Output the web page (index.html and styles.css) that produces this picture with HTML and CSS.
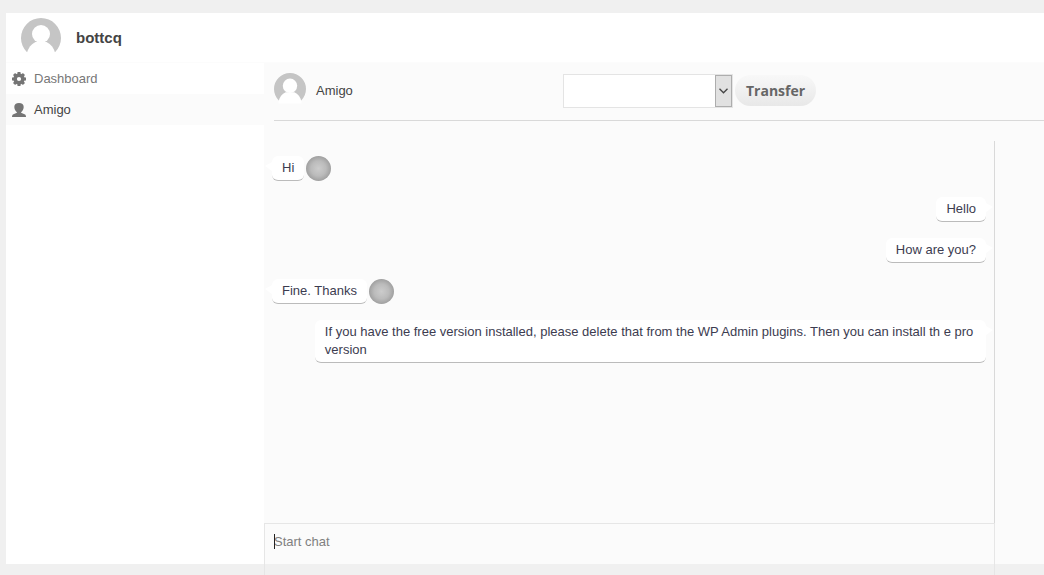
FILE: index.html
```html
<!DOCTYPE html>
<html lang="en">
<head>
    <meta charset="UTF-8" />
    <meta name="viewport" content="width=device-width, initial-scale=1.0"/>
    <title>Chat – Amigo</title>
    <link rel="stylesheet" href="styles.css">
</head>
<body>
    <div class="app">
        <header class="topbar">
            <svg class="avatar avatar-large" viewBox="0 0 40 40" aria-hidden="true">
                <path class="avatar-bg" d="M6 34.300A20 20 0 1 1 34 34.300L30 36H10z"/>
                <circle class="avatar-fg" cx="20" cy="16" r="9"/>
                <path class="avatar-fg" d="M5.500 36C7 30 10 26 14.500 24h11C30 26 33 30 34.500 36v2h-29z"/>
            </svg>
            <strong class="username">bottcq</strong>
        </header>

        <div class="columns">
            <nav class="sidebar">
                <a href="#dashboard" class="nav-item">
                    <svg class="nav-icon" viewBox="0 0 14 14" aria-hidden="true">
                        <circle cx="7" cy="7" r="3.900" fill="none" stroke="currentColor" stroke-width="3.600"/>
                        <path d="M7 0v2.500M7 11.500V14M0 7h2.500M11.500 7H14M2.050 2.050l1.800 1.800M10.150 10.150l1.800 1.800M2.050 11.950l1.800-1.800M10.150 3.850l1.800-1.800" stroke="currentColor" stroke-width="3"/>
                    </svg>
                    Dashboard
                </a>
                <a href="#amigo" class="nav-item active">
                    <svg class="nav-icon" viewBox="0 0 14 14" aria-hidden="true">
                        <path fill="currentColor" d="M7 0C4 0 2.300 1.300 2.300 4c0 2.200 1.200 4.300 2.600 5.200v.6L1.500 11.200C.5 11.600 0 12.300 0 14h14c0-1.700-.5-2.400-1.500-2.800L9.100 9.800v-.6C10.500 8.300 11.700 6.200 11.700 4 11.700 1.300 10 0 7 0z"/>
                    </svg>
                    Amigo
                </a>
            </nav>

            <main class="chat">
                <div class="chat-header">
                    <div class="contact">
                        <svg class="avatar" viewBox="0 0 40 40" aria-hidden="true">
                            <path class="avatar-bg" d="M6 34.300A20 20 0 1 1 34 34.300L30 36H10z"/>
                            <circle class="avatar-fg" cx="20" cy="16" r="9"/>
                            <path class="avatar-fg" d="M5.500 36C7 30 10 26 14.500 24h11C30 26 33 30 34.500 36v2h-29z"/>
                        </svg>
                        <span>Amigo</span>
                    </div>
                    <div class="select-wrap">
                        <select class="operator" aria-label="Transfer to">
                            <option value=""></option>
                        </select>
                        <span class="select-arrow">
                            <svg width="9" height="6" viewBox="0 0 9 6" aria-hidden="true">
                                <path d="M.5.8l4 4 4-4" fill="none" stroke="currentColor" stroke-width="1.300"/>
                            </svg>
                        </span>
                    </div>
                    <button type="button" class="transfer">Transfer</button>
                </div>

                <div class="log">
                    <div class="message">
                        <div class="bubble">Hi</div>
                        <span class="status"></span>
                    </div>
                    <div class="message sent">
                        <div class="bubble">Hello</div>
                    </div>
                    <div class="message sent">
                        <div class="bubble">How are you?</div>
                    </div>
                    <div class="message">
                        <div class="bubble">Fine. Thanks</div>
                        <span class="status"></span>
                    </div>
                    <div class="message sent">
                        <div class="bubble">If you have the free version installed, please delete that from the WP Admin plugins. Then you can install th e pro version</div>
                    </div>
                </div>

                <div class="composer">
                    <textarea class="chat-input" placeholder="Start chat" aria-label="Start chat"></textarea>
                </div>
            </main>
        </div>
    </div>
</body>
</html>
```
FILE: styles.css
```css
* {
    box-sizing: border-box;
}
body {
    font-family: "Liberation Sans", Arial, sans-serif;
    font-size: 13px;
    line-height: 18px;
    color: #444;
    background: #f0f0f0;
    margin: 0;
    padding: 13px 0 11px 6px;
    height: 100vh;
    overflow: hidden;
}
.app {
    display: flex;
    flex-direction: column;
    height: 100%;
    background: #fff;
}
.topbar {
    display: flex;
    align-items: center;
    gap: 15px;
    padding: 5px 15px 4px;
    border-bottom: 1px solid #fcfcfc;
}
.username {
    font-size: 15px;
}
.avatar {
    width: 32px;
    height: 32px;
}
.avatar-large {
    width: 40px;
    height: 40px;
}
.avatar-bg {
    fill: #c5c5c5;
}
.avatar-fg {
    fill: #fff;
}
.columns {
    display: flex;
    flex: 1;
    min-height: 0;
}

/* sidebar */
.sidebar {
    flex: 0 0 258px;
}
.nav-item {
    display: flex;
    align-items: center;
    gap: 8px;
    height: 31px;
    padding: 0 6px;
    color: #777;
    text-decoration: none;
}
.nav-item.active {
    background: #fbfbfb;
    color: #444;
}
.nav-icon {
    width: 14px;
    height: 14px;
    color: #757575;
}

/* chat */
.chat {
    display: flex;
    flex-direction: column;
    flex: 1;
    min-width: 0;
    background: #fbfbfb;
}
.chat-header {
    display: flex;
    align-items: center;
    margin-left: 10px;
    height: 58px;
    padding-bottom: 2px;
    border-bottom: 1px solid #d9d9d9;
}
.contact {
    display: flex;
    align-items: center;
    gap: 10px;
    flex: 0 0 289px;
}
.contact .avatar {
    margin-bottom: 4px;
}
.select-wrap {
    position: relative;
    flex: 0 1 170px;
    margin-right: 2px;
}
.operator {
    display: block;
    appearance: none;
    width: 100%;
    height: 34px;
    border: 1px solid #e4e4e4;
    border-radius: 0;
    background: #fff;
}
.select-arrow {
    position: absolute;
    top: 1px;
    right: 1px;
    bottom: 1px;
    width: 17px;
    display: flex;
    align-items: center;
    justify-content: center;
    background: #e1e1e1;
    border: 1px solid #adadad;
    color: #444;
    pointer-events: none;
}
.transfer {
    height: 31px;
    padding: 0 11px;
    border: none;
    border-radius: 16px;
    background: linear-gradient(#f8f8f8, #e8e8e8);
    color: #666;
    font: bold 14px "Open Sans", sans-serif;
    cursor: pointer;
}
.log {
    display: flex;
    flex-direction: column;
    gap: 16px;
    flex: 1;
    min-height: 0;
    margin: 20px 49px 0 0;
    padding: 15px 8px 0;
    border-right: 1px solid #d9d9d9;
}
.message {
    display: flex;
    align-items: center;
    gap: 2px;
}
.message.sent {
    justify-content: flex-end;
}
.bubble {
    position: relative;
    max-width: 94%;
    padding: 3px 10px;
    background: #fff;
    border-bottom: 1px solid #bbb;
    border-radius: 6px;
    color: #3c3c50;
}
.bubble::before {
    content: "";
    position: absolute;
    top: 6px;
    right: 100%;
    border: solid transparent;
    border-width: 4px 7px 5px 0;
    border-right-color: #fff;
}
.sent .bubble::before {
    right: auto;
    left: 100%;
    border-width: 4px 0 5px 7px;
    border-left-color: #fff;
}
.status {
    width: 25px;
    height: 25px;
    border-radius: 50%;
    background: radial-gradient(circle closest-side, #ccc, #bbb 60%, #a0a0a0);
}
.composer {
    position: relative;
    height: 41px;
    margin-right: 49px;
}
.composer::before {
    content: "";
    position: absolute;
    top: 11px;
    left: 10px;
    width: 1px;
    height: 15px;
    background: #222;
}
.chat-input {
    display: block;
    width: 100%;
    height: 64px;
    padding: 9px;
    border: 1px solid #e6e6e6;
    background: transparent;
    color: #444;
    font: inherit;
    resize: none;
    outline: none;
}
.chat-input::placeholder {
    color: #808080;
}
```
